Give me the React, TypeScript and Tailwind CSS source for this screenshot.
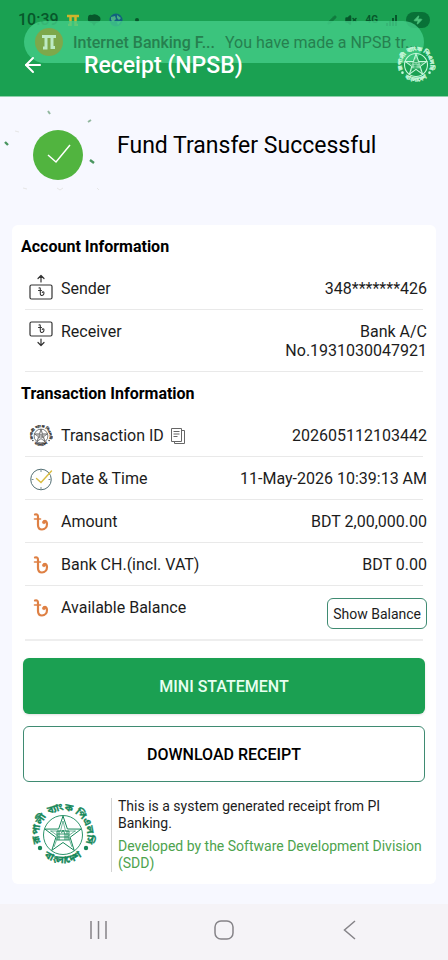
import type { ReactNode } from "react";
import { ArrowLeft, Pencil, VolumeX, Zap } from "lucide-react";

function Emblem({ className, bold = false }: { className?: string; bold?: boolean }) {
  const id = bold ? "bold" : "fine";
  return (
    <svg viewBox="-4 -4 68 68" className={className} fill="none" stroke="currentColor" aria-hidden>
      <defs>
        <path id={`${id}-top`} d="M7.500 38A24 24 0 1 1 52.500 38" />
        <path id={`${id}-bottom`} d="M8 48A29 29 0 0 0 52 48" />
      </defs>
      <g fill="currentColor" stroke="currentColor" strokeWidth={bold ? 0.6 : 0.3} fontSize="10" fontWeight="700" fontFamily="'Noto Sans Bengali', 'Noto Sans', sans-serif">
        <text textAnchor="middle">
          <textPath href={`#${id}-top`} startOffset="50%">রূপালী ব্যাংক পিএলসি</textPath>
        </text>
        <text textAnchor="middle">
          <textPath href={`#${id}-bottom`} startOffset="50%">বাংলাদেশ</textPath>
        </text>
      </g>
      <circle cx="30" cy="30" r="19.5" strokeWidth={bold ? 1.8 : 0.9} />
      <path d="M30 11L34.4 24L48.1 24.1L37.1 32.3L41.2 45.4L30 37.5L18.8 45.4L22.9 32.3L11.9 24.1L25.6 24Z" strokeWidth={bold ? 1.8 : 1} />
      <path d="M30 16L32.5 26H43M17 26H27.5L30 16M21 42L25 31L18 26M39 42L35 31L42 26" strokeWidth="0.6" />
      <path d="M24 26H36V35H24ZM26 26V35M28.5 28L30 25L32 29V35M34 26V35M24 29H36M25 32H35" strokeWidth="0.9" />
      <circle cx="7" cy="43" r="2.2" fill="currentColor" stroke="none" />
      <circle cx="53" cy="43" r="2.2" fill="currentColor" stroke="none" />
    </svg>
  );
}

function TakaIcon() {
  return (
    <svg viewBox="0 0 16 18" className="h-[18px] w-4 text-[#de8044]" fill="none" stroke="currentColor" strokeLinecap="round" aria-hidden>
      <path d="M2 1.5C4.3 1 5 2 5 4V12C5 15 6.5 16.5 9 16.5C12 16.5 14 14 14 11C14 8.5 12.5 7.5 11 8.2" strokeWidth="2.2" />
      <circle cx="11" cy="9.2" r="1.6" fill="currentColor" strokeWidth="0.5" />
      <path d="M1.5 6H7.5" strokeWidth="1.6" />
    </svg>
  );
}

function AccountIcon({ direction }: { direction: "up" | "down" }) {
  const up = direction === "up";
  return (
    <svg viewBox="0 0 24 26" className={up ? "-mt-1 h-[26px] w-6" : "mt-1 h-[26px] w-6"} fill="none" stroke="#333" strokeWidth="1.2" strokeLinecap="round" strokeLinejoin="round" aria-hidden>
      <rect x="1" y={up ? 11 : 1} width="22" height="14" rx="1.5" />
      <path d={up ? "M12 8V1.5M9 4.5L12 1.5L15 4.5" : "M12 18V24.5M9 21.5L12 24.5L15 21.5"} />
      <path
        d={up ? "M10 14C11 13.5 11.3 14 11.3 15V19.5C11.3 22.5 15 22 15 19C15 17.5 13.3 17.5 13.3 18.5M9.5 16.5H12.5" : "M10 4C11 3.5 11.3 4 11.3 5V9.5C11.3 12.5 15 12 15 9C15 7.5 13.3 7.5 13.3 8.5M9.5 6.5H12.5"}
        strokeWidth="1.1"
      />
    </svg>
  );
}

function ClockIcon() {
  return (
    <svg viewBox="0 0 24 24" className="size-6" fill="none" aria-hidden>
      <circle cx="12" cy="12.5" r="10.3" stroke="#536f74" strokeWidth="1" />
      <path d="M12 3V5M12 20V22M2.5 12.5H4.5M19.5 12.5H21.5" stroke="#536f74" strokeWidth="0.8" />
      <path d="M7.5 11.5L12 15.5L22.5 4" stroke="#d9bc3f" strokeWidth="1.4" strokeLinecap="round" />
    </svg>
  );
}

function CopyIcon() {
  return (
    <svg viewBox="0 0 16 18" className="h-[18px] w-4" fill="none" stroke="#666" strokeWidth="1" aria-hidden>
      <path d="M1.5 1.5H11.5V14.5H1.5ZM11.5 3.5H14.5V16.5H4.5V14.5" />
      <path d="M3.5 4.5H9.5M3.5 7H9.5M3.5 9.5H7.5" />
    </svg>
  );
}

function Row({ icon, label, children, last = false }: { icon: ReactNode; label: ReactNode; children: ReactNode; last?: boolean }) {
  return (
    <div className={last ? "relative flex h-[55px] justify-between pt-3" : "relative flex justify-between py-3"}>
      <dt className="flex h-[19px] items-center">
        <span className="ml-2 mr-2 flex w-6 justify-center">{icon}</span>
        {label}
      </dt>
      <dd className="text-right">{children}</dd>
      <span className={last ? "absolute bottom-0 left-1 right-1 h-0.5 bg-[#eeeeee]" : "absolute bottom-0 left-1 right-1 h-px bg-[#e9e9e9]"} />
    </div>
  );
}

export default function App() {
  return (
    <div className="flex min-h-screen flex-col bg-[#f7f8ff] font-['Roboto',sans-serif] text-base leading-[19px] text-[#1c1c1c]">
      <header className="relative h-[97px] border-b border-[#8fd0ac] bg-[#1aa152]">
        <div className="flex h-10 items-center justify-between px-[18px] text-[#07572b]">
          <div className="flex items-center gap-2">
            <span className="text-base font-medium">10:39</span>
            <svg viewBox="0 0 12 12" className="size-3" fill="none" stroke="#cfb52c" strokeWidth="2.5" aria-hidden>
              <path d="M0 2H12M3.5 2V11H1M8.5 2V11H11" />
            </svg>
            <svg viewBox="0 0 14 14" className="size-3.5" fill="currentColor" aria-hidden>
              <path d="M1 5Q1 1 5 2Q9 0 13 4Q15 9 9 10L7 13L5 10Q0 9 1 5Z" />
            </svg>
            <svg viewBox="0 0 14 14" className="size-3.5" aria-hidden>
              <circle cx="7" cy="7" r="6.5" fill="#12617e" />
              <path d="M2 4L6 3L7 6L4 9L2 7ZM8 2L12 5L10 7L8 5ZM8 9L12 8L9 12Z" fill="#48ae83" />
            </svg>
            <span className="ml-1 size-1 rounded-full bg-current" />
          </div>
          <div className="flex items-center gap-1">
            <Pencil className="mr-1 size-2.5 opacity-50" fill="currentColor" aria-hidden />
            <VolumeX className="mr-1 size-3" fill="currentColor" strokeWidth={3} aria-hidden />
            <span className="mr-1 text-[10px] font-bold leading-3">4G</span>
            <svg viewBox="0 0 12 12" className="mr-1 size-3" fill="currentColor" aria-hidden>
              <path d="M0 9H2V12H0ZM3 7H5V12H3ZM6 4H8V12H6ZM9 1H11V12H9Z" />
            </svg>
            <span className="flex h-4 w-6 items-center justify-center rounded-full bg-[#087137]">
              <Zap className="size-2.5 fill-[#4fc57f] text-[#4fc57f]" aria-hidden />
            </span>
          </div>
        </div>
        <div className="absolute left-6 right-6 top-[21px] flex h-[42px] items-center rounded-full bg-[#43cd88]/80 pl-[11px] pr-4 text-[#26804f]">
          <span className="flex size-7 shrink-0 items-center justify-center rounded-full bg-[#7da84b] text-[#bdeac3]">
            <svg viewBox="0 0 16 16" className="size-4" fill="none" stroke="currentColor" strokeWidth="3" aria-hidden>
              <path d="M1 2.5H15M5 3V14H2M11 3V13.5H14" />
            </svg>
          </span>
          <span className="ml-2.5 shrink-0 font-medium">Internet Banking F...</span>
          <span className="ml-2.5 whitespace-nowrap">You have made a NPSB tr...</span>
        </div>
        <div className="absolute inset-x-0 top-[45px] flex h-10 items-center text-white">
          <button type="button" aria-label="Back" className="ml-[21px] flex w-[63px] items-center">
            <ArrowLeft className="size-6" strokeWidth={2} />
          </button>
          <h1 className="text-[23px] font-medium">Receipt (NPSB)</h1>
          <Emblem bold className="ml-auto mr-3 size-10 text-[#c8f7db]" />
        </div>
      </header>

      <main className="flex-1 px-3 pb-5">
        <section className="flex h-32 items-start">
          <svg viewBox="0 0 105 90" className="-ml-3 mr-3 mt-3 h-[90px] w-[105px] shrink-0" fill="none" aria-hidden>
            <circle cx="58" cy="46" r="25" fill="#51b43f" />
            <path d="M48 46L56 53L70 36" stroke="#fff" strokeWidth="1.5" />
            <path d="M5 33L8 36M90 51L94 54" stroke="#4a9660" strokeWidth="2.4" />
            <path d="M48 2L50 5M88 13L91 11" stroke="#93b8a0" strokeWidth="2" />
            <path d="M15 22L19 23M23 79L27 80M57 79L60 81L63 79M97 79L99 81" stroke="#e6e6e6" />
          </svg>
          <h2 className="mt-[39px] text-[23px] text-black">Fund Transfer Successful</h2>
        </section>

        <section className="rounded-md bg-white px-[9px] pb-3 pt-3">
          <h3 className="font-bold text-black">Account Information</h3>
          <dl className="mt-[11px]">
            <Row icon={<AccountIcon direction="up" />} label="Sender">348*******426</Row>
            <Row icon={<AccountIcon direction="down" />} label="Receiver">
              <span className="block">Bank A/C</span>
              <span className="block">No.1931030047921</span>
            </Row>
          </dl>

          <h3 className="mt-3 font-bold text-black">Transaction Information</h3>
          <dl className="mt-[11px]">
            <Row
              icon={<Emblem bold className="size-6 text-[#333]" />}
              label={
                <>
                  Transaction ID
                  <button type="button" aria-label="Copy transaction ID" className="ml-1.5">
                    <CopyIcon />
                  </button>
                </>
              }
            >
              202605112103442
            </Row>
            <Row icon={<ClockIcon />} label={<>Date &amp; Time</>}>11-May-2026 10:39:13 AM</Row>
            <Row icon={<TakaIcon />} label="Amount">BDT 2,00,000.00</Row>
            <Row icon={<TakaIcon />} label="Bank CH.(incl. VAT)">BDT 0.00</Row>
            <Row icon={<TakaIcon />} label="Available Balance" last>
              <button type="button" className="h-[31px] rounded-md border border-[#3f8b72] px-[5px] text-sm">Show Balance</button>
            </Row>
          </dl>

          <div className="mx-0.5 mt-[17px] flex flex-col gap-3">
            <button type="button" className="h-14 rounded-md bg-[#1ba052] font-medium text-[#e7fff0] shadow-sm">MINI STATEMENT</button>
            <button type="button" className="h-14 rounded-md border border-[#3f8b72] font-medium text-black">DOWNLOAD RECEIPT</button>
          </div>

          <footer className="mt-4 flex items-center">
            <Emblem className="ml-2 mr-3.5 size-[68px] shrink-0 text-[#16885a]" />
            <div className="flex flex-col gap-1.5 border-l border-[#d4d4d4] pl-1.5 text-sm leading-[17px]">
              <p>This is a system generated receipt from PI Banking.</p>
              <p className="text-[#4da34e]">Developed by the Software Development Division (SDD)</p>
            </div>
          </footer>
        </section>
      </main>

      <nav className="flex h-14 items-center justify-between bg-[#f5f3f7] px-[86px] pb-1 text-[#858388]">
        <button type="button" aria-label="Recent apps">
          <svg viewBox="0 0 24 24" className="size-6" fill="none" stroke="currentColor" strokeWidth="1.5" aria-hidden>
            <path d="M5 3V21M12.5 3V21M20 3V21" />
          </svg>
        </button>
        <button type="button" aria-label="Home">
          <svg viewBox="0 0 24 24" className="size-6" fill="none" stroke="currentColor" strokeWidth="1.5" aria-hidden>
            <rect x="3" y="3" width="18" height="18" rx="6" />
          </svg>
        </button>
        <button type="button" aria-label="Back to previous screen">
          <svg viewBox="0 0 24 24" className="size-6" fill="none" stroke="currentColor" strokeWidth="1.5" aria-hidden>
            <path d="M17 3L6.5 12L17 21" />
          </svg>
        </button>
      </nav>
    </div>
  );
}
